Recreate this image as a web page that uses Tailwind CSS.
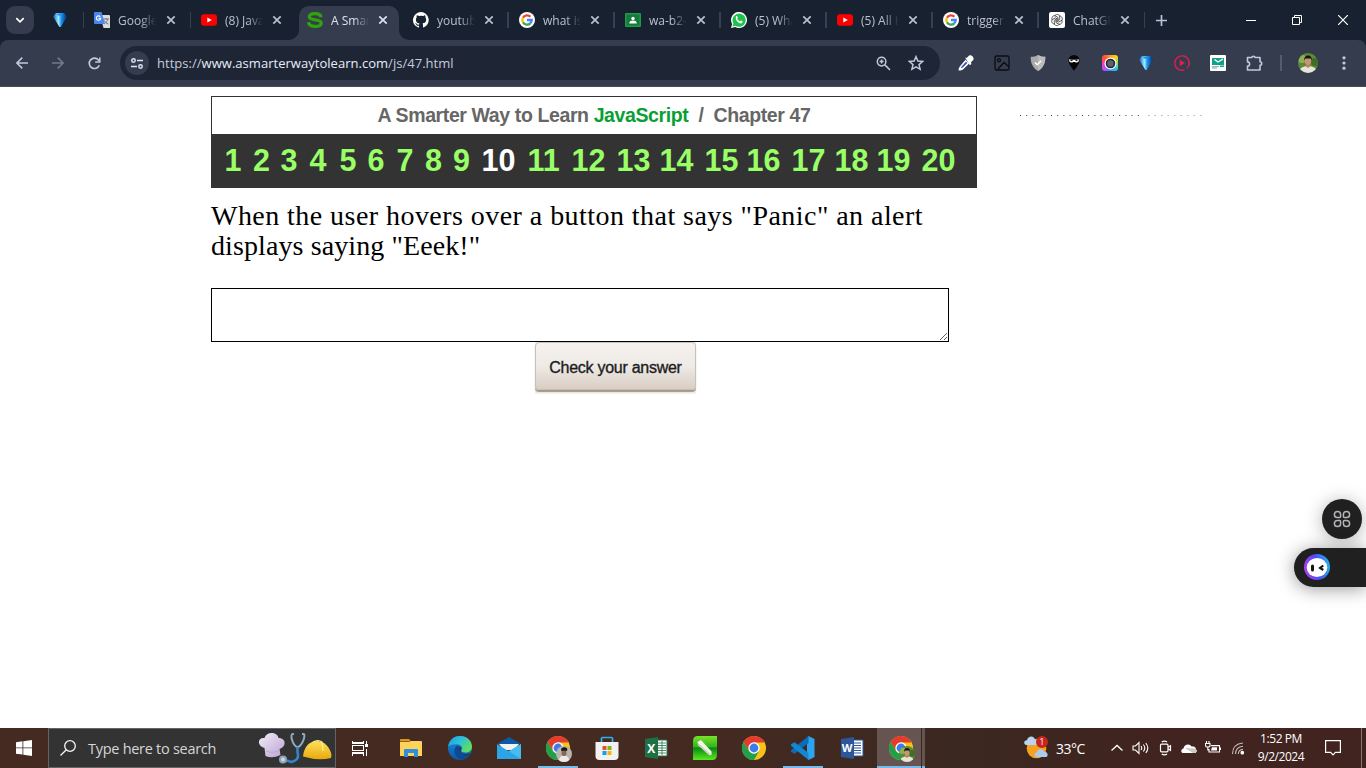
<!DOCTYPE html>
<html lang="en">
<head>
<meta charset="utf-8">
<title>A Smarter Way to Learn JavaScript</title>
<script src="https://cdn.jsdelivr.net/npm/@tailwindcss/browser@4"></script>
</head>
<body class="w-[1366px] h-[768px] overflow-hidden bg-white flex flex-col relative font-['Open_Sans',sans-serif]">

<svg class="absolute w-0 h-0" aria-hidden="true">
  <defs>
    <linearGradient id="gemg" x1="0" x2="1"><stop offset="0" stop-color="#0b5ec4"/><stop offset=".38" stop-color="#9ff0ff"/><stop offset=".6" stop-color="#1590f0"/><stop offset="1" stop-color="#062f72"/></linearGradient>
    <linearGradient id="edgeg" x1="0" y1="0" x2="1" y2=".6"><stop offset="0" stop-color="#1b9de2"/><stop offset=".5" stop-color="#2fc0d8"/><stop offset="1" stop-color="#5fe05a"/></linearGradient>
    <linearGradient id="edgeb" x1="0" y1="0" x2="0" y2="1"><stop offset="0" stop-color="#1b8fdf"/><stop offset="1" stop-color="#0d57a8"/></linearGradient>
    <linearGradient id="hat" x1="0" y1="0" x2="1" y2="1"><stop offset="0" stop-color="#f4ecf8"/><stop offset="1" stop-color="#b9a3d3"/></linearGradient>
    <linearGradient id="helm" x1="0" y1="0" x2="0" y2="1"><stop offset="0" stop-color="#ffe05a"/><stop offset="1" stop-color="#e8a90c"/></linearGradient>
    <linearGradient id="green" x1="0" y1="0" x2="0" y2="1"><stop offset="0" stop-color="#7be02a"/><stop offset=".45" stop-color="#2fb91a"/><stop offset=".5" stop-color="#078a12"/><stop offset="1" stop-color="#5ce820"/></linearGradient>
    <linearGradient id="bot" x1="0" y1="0.6" x2="1" y2="0.4"><stop offset="0" stop-color="#b13cf0"/><stop offset=".5" stop-color="#4a4cf5"/><stop offset="1" stop-color="#27b2f0"/></linearGradient>
    <clipPath id="circ"><circle cx="10" cy="10" r="10"/></clipPath>
    <symbol id="gem" viewBox="0 0 16 16"><path d="M3.800 1h8.400L14.800 4.800 8.800 15H7.400L1.200 4.800z" fill="url(#gemg)"/><path d="M4.400 1.400h7L9.800 3.600H6z" fill="#1b8ff0"/></symbol>
    <symbol id="yt" viewBox="0 0 16 16"><rect y="2.300" width="16" height="11.400" rx="3" fill="#f00"/><path d="M6.300 5.400v5.200L10.800 8z" fill="#fff"/></symbol>
    <symbol id="goog" viewBox="0 0 16 16"><circle cx="8" cy="8" r="8" fill="#fff"/><g fill="none" stroke-width="2.300"><path d="M4 5.600A4.700 4.700 0 0 1 11.400 4.700" stroke="#ea4335"/><path d="M4 10.400a4.700 4.700 0 0 1 0-4.800" stroke="#fbbc05"/><path d="M11.200 11.400A4.700 4.700 0 0 1 4 10.400" stroke="#34a853"/><path d="M8 8h4.700a4.700 4.700 0 0 1-1.500 3.400" stroke="#4285f4"/></g></symbol>
    <symbol id="chrome" viewBox="0 0 24 24"><circle cx="12" cy="12" r="12" fill="#fbc116"/><path d="M12 6.500H22.600A12 12 0 0 0 1.600 6l5.200 9z" fill="#e33b2e"/><path d="M1.600 6 6.800 15 12 17.500l5.200-2.500L12 24A12 12 0 0 1 1.600 6z" fill="#1fa04b"/><circle cx="12" cy="12" r="5.700" fill="#fff"/><circle cx="12" cy="12" r="4.400" fill="#3b7ded"/></symbol>
    <symbol id="face" viewBox="0 0 20 20"><g clip-path="url(#circ)"><rect width="20" height="20" fill="#5c8a35"/><circle cx="4" cy="6" r="4" fill="#8fae5a"/><circle cx="17" cy="9" r="4" fill="#406e28"/><path d="M1 20c0-5 4-7 9-7s9 2 9 7z" fill="#e7e4da"/><path d="M8 10h4v3.500l-2 1.500-2-1.500z" fill="#b9825f"/><ellipse cx="10" cy="8" rx="3.200" ry="4" fill="#c99474"/><path d="M6.300 7.500c-1-6.500 8.300-7 7.500 0l-1-2H7.400z" fill="#17130f"/></g></symbol>
    <symbol id="x" viewBox="0 0 10 10"><path d="M1.300 1.300l7.400 7.400M8.700 1.300 1.300 8.700" stroke="currentColor" stroke-width="1.700"/></symbol>
  </defs>
</svg>

<!-- Tab strip -->
<header class="h-10 bg-[#18212f] flex shrink-0 text-[#b9c0d0] text-[12px]">
  <div class="w-[83px] flex items-start pl-1.5 pt-1.5">
    <div class="size-7 rounded-[9px] bg-[#343c4d] flex items-center justify-center"><svg class="size-[10px] text-white" viewBox="0 0 10 10"><path d="M1.300 3.200 5 6.800l3.700-3.600" fill="none" stroke="currentColor" stroke-width="1.700"/></svg></div>
    <svg class="size-4 ml-[17.500px] mt-1.5"><use href="#gem"/></svg>
  </div>
  <div class="w-[1061px] grid grid-cols-10">
    <div class="flex h-10 items-center relative"><i class="absolute left-[-0.500px] w-[1.500px] h-4 bg-[#364052]"></i>
      <svg class="size-4 ml-[11px]" viewBox="0 0 16 16"><path d="M6 3h9a1 1 0 0 1 1 1v12H9.500z" fill="#dcdcdc"/><path d="M9 7h6M12 6v1.500M10 12c2-1 3.500-3 3.800-5M10.500 8.500c.5 1.500 2 3 4 3.500" stroke="#6c7a86" fill="none"/><path d="M1 0h6.500L11 12H1a1 1 0 0 1-1-1V1a1 1 0 0 1 1-1z" fill="#4a86f0"/><path d="M6.300 4.800a2.200 2.200 0 1 0 .4 1.600H4.600" fill="none" stroke="#fff" stroke-width="1.100"/></svg>
      <span class="pt-0.5 ml-2 w-[38px] overflow-hidden whitespace-nowrap mask-r-from-60% mask-r-to-100%">Google Translate</span><svg class="size-[10px] ml-[9.500px]"><use href="#x"/></svg></div>
    <div class="flex h-10 items-center relative"><i class="absolute left-[0.500px] w-[1.500px] h-4 bg-[#364052]"></i>
      <svg class="size-4 ml-[11.900px]"><use href="#yt"/></svg><span class="pt-0.5 ml-2 w-[38px] overflow-hidden whitespace-nowrap mask-r-from-60% mask-r-to-100%">(8) JavaScript</span><svg class="size-[10px] ml-[9.500px]"><use href="#x"/></svg></div>
    <div class="flex h-10 items-center relative text-[#dde2ee]">
      <div class="absolute left-[3.800px] top-1.5 w-[100px] h-[34px] rounded-t-[10px] bg-[#343c4d]"></div>
      <svg class="absolute left-[-6px] bottom-0 size-[10px]" viewBox="0 0 10 10"><path d="M10 0v10H0A10 10 0 0 0 10 0" fill="#343c4d"/></svg>
      <svg class="absolute left-[103.500px] bottom-0 size-[10px] z-10" viewBox="0 0 10 10"><path d="M0 0v10h10A10 10 0 0 1 0 0" fill="#343c4d"/></svg>
      <svg class="size-4 ml-[11.800px] relative" viewBox="0 0 16 16"><path d="M14 5.300C13.700 2.600 11.500 1.600 8 1.600S2.300 2.700 2.300 4.700c0 4.600 11.900 1.600 11.900 6.200 0 2.300-2.200 3.500-6.100 3.500-3.700 0-6.200-1.200-6.500-4.200" fill="none" stroke="#2fa30b" stroke-width="3.300"/></svg>
      <span class="relative pt-0.5 ml-2 w-[38px] overflow-hidden whitespace-nowrap mask-r-from-60% mask-r-to-100%">A Smarter Way</span><svg class="relative size-[10px] ml-[9.500px]"><use href="#x"/></svg></div>
    <div class="flex h-10 items-center relative">
      <svg class="size-4 ml-[11.700px]" viewBox="0 0 16 16"><path d="M8 0a8 8 0 0 0-2.530 15.590c.4.070.55-.17.550-.380v-1.490C3.800 14.200 3.330 12.650 3.330 12.650c-.36-.92-.89-1.170-.89-1.170-.73-.5.060-.49.060-.49.800.060 1.230.830 1.230.830.710 1.220 1.870.870 2.330.660.070-.52.280-.87.510-1.070-1.780-.2-3.640-.89-3.640-3.950 0-.87.310-1.590.820-2.150-.08-.2-.36-1.010.080-2.120 0 0 .67-.21 2.200.820a7.600 7.600 0 0 1 4 0c1.530-1.040 2.200-.82 2.200-.82.440 1.110.160 1.920.080 2.120.510.560.820 1.280.820 2.150 0 3.070-1.870 3.750-3.650 3.950.290.250.540.730.540 1.480v2.200c0 .210.150.460.550.380A8 8 0 0 0 8 0" fill="#fff"/></svg>
      <span class="pt-0.5 ml-2 w-[38px] overflow-hidden whitespace-nowrap mask-r-from-60% mask-r-to-100%">youtube</span><svg class="size-[10px] ml-[9.500px]"><use href="#x"/></svg></div>
    <div class="flex h-10 items-center relative"><i class="absolute left-0 w-[1.500px] h-4 bg-[#364052]"></i>
      <svg class="size-4 ml-[11.600px]"><use href="#goog"/></svg><span class="pt-0.5 ml-2 w-[38px] overflow-hidden whitespace-nowrap mask-r-from-60% mask-r-to-100%">what is a</span><svg class="size-[10px] ml-[9.500px]"><use href="#x"/></svg></div>
    <div class="flex h-10 items-center relative"><i class="absolute left-0 w-[1.500px] h-4 bg-[#364052]"></i>
      <svg class="size-4 ml-[11.500px]" viewBox="0 0 16 16"><rect y="1" width="16" height="14" rx="1" fill="#1f9b4d"/><rect x="1.500" y="2.500" width="13" height="11" fill="#137a38"/><circle cx="8" cy="6.500" r="1.700" fill="#fff"/><path d="M4.200 11.500c0-2.400 2-3 3.800-3s3.800.6 3.800 3z" fill="#fff"/></svg>
      <span class="pt-0.5 ml-2 w-[38px] overflow-hidden whitespace-nowrap mask-r-from-60% mask-r-to-100%">wa-b2-q</span><svg class="size-[10px] ml-[9.500px]"><use href="#x"/></svg></div>
    <div class="flex h-10 items-center relative"><i class="absolute left-[-0.500px] w-[1.500px] h-4 bg-[#364052]"></i>
      <svg class="size-4 ml-[11.400px]" viewBox="0 0 16 16"><path d="M0 16 1.100 12A8 8 0 1 1 4.200 15z" fill="#fff"/><path d="M1.500 14.500l.9-3A6.600 6.600 0 1 1 4.500 13.700z" fill="#1fc24b"/><path d="M5 4.300c.5-.6 1-.5 1.200-.1l.7 1.600-.7 1c.5 1.200 1.500 2 2.700 2.600l.9-.9 1.700.8c.4.300 0 1.600-.9 2-2.600 1-6.900-3.200-5.600-7z" fill="#fff"/></svg>
      <span class="pt-0.5 ml-2 w-[38px] overflow-hidden whitespace-nowrap mask-r-from-60% mask-r-to-100%">(5) WhatsApp</span><svg class="size-[10px] ml-[9px]"><use href="#x"/></svg></div>
    <div class="flex h-10 items-center relative"><i class="absolute left-[-0.500px] w-[1.500px] h-4 bg-[#364052]"></i>
      <svg class="size-4 ml-[11.300px]"><use href="#yt"/></svg><span class="pt-0.5 ml-2 w-[38px] overflow-hidden whitespace-nowrap mask-r-from-60% mask-r-to-100%">(5) All HTML</span><svg class="size-[10px] ml-[9px]"><use href="#x"/></svg></div>
    <div class="flex h-10 items-center relative"><i class="absolute left-[-0.500px] w-[1.500px] h-4 bg-[#364052]"></i>
      <svg class="size-4 ml-[11.200px]"><use href="#goog"/></svg><span class="pt-0.5 ml-2 w-[38px] overflow-hidden whitespace-nowrap mask-r-from-70% mask-r-to-100%">trigger in</span><svg class="size-[10px] ml-[9px]"><use href="#x"/></svg></div>
    <div class="flex h-10 items-center relative"><i class="absolute left-[-0.500px] w-[1.500px] h-4 bg-[#364052]"></i>
      <svg class="size-4 ml-[11.100px]" viewBox="0 0 16 16"><rect width="16" height="16" rx="2" fill="#fff"/><g fill="none" stroke="#333" stroke-width=".75"><path id="pt" d="M5.700 4.200C6.300 2 9.700 1.700 10.700 4v3.600L8 9.200"/><use href="#pt" transform="rotate(60 8 8)"/><use href="#pt" transform="rotate(120 8 8)"/><use href="#pt" transform="rotate(180 8 8)"/><use href="#pt" transform="rotate(240 8 8)"/><use href="#pt" transform="rotate(300 8 8)"/></g></svg>
      <span class="pt-0.5 ml-2 w-[38px] overflow-hidden whitespace-nowrap mask-r-from-60% mask-r-to-100%">ChatGPT</span><svg class="size-[10px] ml-[9px]"><use href="#x"/></svg></div>
  </div>
  <div class="flex items-center w-[84px]"><i class="-ml-[0.500px] w-[1.500px] h-4 bg-[#364052]"></i><svg class="size-[11px] ml-[10.500px]" viewBox="0 0 11 11"><path d="M5.500 0v11M0 5.500h11" stroke="#b9c0d8" stroke-width="1.700"/></svg></div>
  <div class="grid grid-cols-3 w-[138px] items-center justify-items-center">
    <svg class="w-[10px] h-[11px]" viewBox="0 0 10 11" shape-rendering="crispEdges"><path d="M0 5.500h10" stroke="#fff"/></svg>
    <svg class="size-[10px]" viewBox="0 0 10 10" fill="none" stroke="#fff"><path d="M.5 2.500h7v7h-7zM2.500 2.500v-2h7v7h-2"/></svg>
    <svg class="size-[10px]" viewBox="0 0 10 10"><path d="M0 0l10 10M10 0 0 10" stroke="#fff" stroke-width="1.200"/></svg>
  </div>
</header>

<!-- Toolbar -->
<div class="bg-[#18212f] shrink-0">
<nav class="h-[47px] bg-[#343c4d] border-b border-[#4a4c54] rounded-t-[8px] flex items-center text-[#c3c9dc]">
  <div class="flex w-[116px] pl-1 shrink-0">
    <div class="w-9 flex justify-center"><svg class="size-3" viewBox="0 0 12 12"><path d="M12 6H1M6.300.6.900 6l5.400 5.400" fill="none" stroke="#c3c9dc" stroke-width="1.500"/></svg></div>
    <div class="w-9 flex justify-center"><svg class="size-3" viewBox="0 0 12 12"><path d="M0 6h11M5.700.6 11.100 6l-5.400 5.400" fill="none" stroke="#737b8b" stroke-width="1.500"/></svg></div>
    <div class="w-9 flex justify-center"><svg class="size-[13px]" viewBox="0 0 13 13"><path d="M11.300 8.200A5.200 5.200 0 1 1 10.500 3L12 4.500" fill="none" stroke="#c3c9dc" stroke-width="1.600"/><path d="M11.800.4v4.600H7.200" fill="none" stroke="#c3c9dc" stroke-width="1.500"/></svg></div>
  </div>
  <div class="ml-1 w-[820px] h-[34px] rounded-full bg-[#1e2636] flex items-center shrink-0">
    <div class="ml-[5px] size-6 rounded-full bg-[#343c4d] flex items-center justify-center"><svg class="w-3 h-[11px]" viewBox="0 0 12 11" fill="none" stroke="#dfe4f0" stroke-width="1.500"><circle cx="2.500" cy="2.500" r="1.700"/><path d="M6 2.500h6M0 8.500h6"/><circle cx="9.500" cy="8.500" r="1.700"/></svg></div>
    <div class="ml-2 pt-0.5 text-[13px] tracking-[0.030px] whitespace-nowrap text-[#c5cad6]">https://<span class="text-[#e9edf6]">www.asmarterwaytolearn.com</span>/js/47.html</div>
    <svg class="ml-auto size-[15px]" viewBox="0 0 15 15" fill="none" stroke="#c3c9dc" stroke-width="1.500"><circle cx="5.600" cy="5.600" r="4.300"/><path d="m8.900 8.900 5.100 5.100M5.600 3.600v4M3.600 5.600h4"/></svg>
    <svg class="ml-[17px] mr-4 size-4" viewBox="0 0 16 16"><path d="m8 1.700 1.900 4.400 4.700.4-3.600 3.100 1.100 4.700L8 11.800l-4.100 2.500L5 9.600 1.400 6.500l4.700-.4z" fill="none" stroke="#c3c9dc" stroke-width="1.500"/></svg>
  </div>
  <div class="ml-2 grid grid-cols-9 w-[324px] justify-items-center items-center">
    <svg class="size-4" viewBox="0 0 16 16"><path d="M.6 15.400c0-1.800.5-3.200 1.600-4.400L7.500 4.800l3.700 3.700-5.700 5.400c-1.300 1.100-2.900 1.700-4.900 1.500z" fill="#fff"/><path d="m2.800 13.200.8-1.800L8 6.800l1.300 1.300-4.500 4.300z" fill="#2c50c8"/><path d="m7 2.500 1.600.4L11.100.6c2-1.200 5.500 1.800 4.300 4.200L13 7.300l.4 1.700-1.500 1.200z" fill="#fff"/></svg>
    <svg class="size-4" viewBox="0 0 16 16" fill="none" stroke="#0b0d12" stroke-width="1.300"><rect x="1" y="1" width="14" height="14" rx="1.500"/><circle cx="5" cy="5.200" r="1.500"/><path d="m4 14 6-6.500 5 4.500"/></svg>
    <svg class="size-4" viewBox="0 0 16 16"><path d="M8 0c2 1.300 4.500 1.800 7.300 1.800C15.500 9 12.500 13.500 8 16 3.500 13.500.5 9 .7 1.800 3.500 1.800 6 1.300 8 0" fill="#aaa"/><path d="M8 0c2 1.300 4.500 1.800 7.300 1.800C15.500 9 12.500 13.500 8 16z" fill="#bcbcbc"/><path d="m5 7.500 2.200 2.200 4-4" fill="none" stroke="#fff" stroke-width="1.500"/></svg>
    <svg class="size-4" viewBox="0 0 16 16"><path d="M8 16C6.500 13 2.500 9.500 2.500 5.500a5.500 5.500 0 0 1 11 0C13.500 9.500 9.500 13 8 16" fill="#050505"/><path d="M3.200 4.300c3 .7 6.600.7 9.600 0 .3 2.300-.6 3.200-2.300 3.200-1.100 0-1.500-.6-2.500-.6s-1.400.6-2.500.6c-1.700 0-2.600-.9-2.300-3.200" fill="#fff"/><path d="M4.500 5.600h2M9.500 5.600h2" stroke="#000"/></svg>
    <div class="size-4 rounded-[3px] bg-[conic-gradient(#ff9a1f,#ffd21f,#7fdf5f,#28c7f0,#3587ff,#c04cff,#ff3aa8,#ff5030,#ff9a1f)] flex items-center justify-center"><svg class="size-[13px]" viewBox="0 0 13 13"><circle cx="6.500" cy="6.500" r="6" fill="#fff"/><circle cx="6.500" cy="6.500" r="4" fill="#5b626c" stroke="#242a33" stroke-width="1.600"/></svg></div>
    <svg class="size-4"><use href="#gem"/></svg>
    <svg class="size-4" viewBox="0 0 16 16"><path d="M14.300 11.500A7.200 7.200 0 1 0 10.500 14.800" fill="none" stroke="#d5204f" stroke-width="1.400"/><path d="M15 6.500a7.200 7.200 0 0 1-2.300 7" fill="none" stroke="#d5204f" stroke-width="1.200"/><path d="M5.700 4.800v6.400L11 8z" fill="#e01f50"/></svg>
    <svg class="size-4" viewBox="0 0 16 16"><rect width="16" height="16" rx="1" fill="#fff"/><path d="M2 3h12v7H2z" fill="#12a08a"/><path d="m4.500 4.500 3.500 2.500 5-3" fill="none" stroke="#fff" stroke-width="1.400"/><path d="M2 11.700h7M2 13h5" stroke="#6b8f9b" stroke-width=".8"/><path d="M10 10.500h4v1.500h-4z" fill="#17a88f"/></svg>
    <svg class="w-[17px] h-4" viewBox="0 0 17 16"><path d="M1.500 2.500h4.300a1.700 1.700 0 0 1 3.300 0h4.900v4.300a1.700 1.700 0 0 1 0 3.400V15H1.500v-3.900a2.100 2.100 0 0 0 0-4.200z" fill="none" stroke="#c3c9dc" stroke-width="1.600" stroke-linejoin="round"/></svg>
  </div>
  <i class="ml-2 w-[1.500px] h-4 bg-[#525b70]"></i>
  <svg class="ml-[16.500px] size-5"><use href="#face"/></svg>
  <svg class="ml-6 w-1 h-[14px]" viewBox="0 0 4 14" fill="#c3c9dc"><circle cx="2" cy="1.800" r="1.600"/><circle cx="2" cy="7" r="1.600"/><circle cx="2" cy="12.200" r="1.600"/></svg>
</nav>
</div>

<!-- Page -->
<main class="flex-1 flex items-start pt-[9px] pl-[211px]">
  <section class="w-[766px]">
    <div class="h-[38px] border border-b-0 border-[#333] flex justify-center items-center font-['Liberation_Sans',sans-serif] font-bold text-[19.500px] text-[#666] whitespace-pre"><span class="tracking-[-0.390px]">A Smarter Way to Learn <span class="text-[#0a9f35]">JavaScript</span>  /  Chapter 47</span></div>
    <div class="h-[54px] bg-[#333] pl-[13.500px] grid items-center grid-cols-[28.5px_27.5px_29px_30px_28px_29px_28.500px_28px_28.500px_46px_44px_45px_43px_45px_42px_45px_43px_42px_45px_40px] font-['Liberation_Sans',sans-serif] font-bold text-[30.500px] text-[#9f6]">
      <span>1</span><span>2</span><span>3</span><span>4</span><span>5</span><span>6</span><span>7</span><span>8</span><span>9</span><span class="text-white">10</span><span>11</span><span>12</span><span>13</span><span>14</span><span>15</span><span>16</span><span>17</span><span>18</span><span>19</span><span>20</span>
    </div>
    <p class="mt-[13px] font-['Georgia','Liberation_Serif',serif] text-[28px] leading-[30px] text-black whitespace-nowrap"><span class="tracking-[0.450px]">When the user hovers over a button that says "Panic" an alert</span><br><span class="tracking-[0.100px]">displays saying "Eeek!"</span></p>
    <textarea class="mt-[27px] block w-[738px] h-[54px] border border-black bg-white resize outline-none"></textarea>
    <div class="ml-[324px] w-[161px] h-[52px] bg-[#f3f0ec]">
      <button class="block w-[161px] h-[48px] rounded-[4px] border border-[#c9c1b8] bg-linear-to-b from-[#f5f2ef] via-[#eeeae6] to-[#d9cec3] shadow-[0_2px_1px_#a3988a] font-['Liberation_Sans',sans-serif] text-[16px] text-[#1c1c1c] [-webkit-text-stroke:0.350px_#1c1c1c] whitespace-nowrap"><span class="relative top-0.5 tracking-[-0.270px]">Check your answer</span></button>
    </div>
  </section>
  <svg class="ml-[42px] mt-[18px] w-[184px] h-[3px]" viewBox="0 0 184 3"><path d="M1 1.500h124" stroke="#444" stroke-dasharray="1 5.200"/><path d="M129 1.500h55" stroke="#b5b5b5" stroke-dasharray="1.500 5"/></svg>
</main>

<!-- Floating assistant widgets -->
<div class="absolute left-[1322px] top-[499px] size-10 rounded-full bg-[#202020] shadow-[0_2px_18px_rgba(0,0,0,0.3)] flex items-center justify-center">
  <svg class="size-[18px]" viewBox="0 0 18 18" fill="none" stroke="#b4b4b8" stroke-width="1.500"><path id="pl" d="M7.600 4.500V6.600a1 1 0 0 1-1 1H4.500A3.100 3.100 0 0 1 1.400 4.500 3.100 3.100 0 0 1 7.600 4.500z"/><use href="#pl" transform="rotate(90 9 9)"/><use href="#pl" transform="rotate(180 9 9)"/><use href="#pl" transform="rotate(270 9 9)"/></svg>
</div>
<div class="absolute left-[1294px] top-[548px] w-[72px] h-[39px] rounded-l-full bg-[#202020] shadow-[0_2px_18px_rgba(0,0,0,0.4)] flex items-center pl-[10px] pb-px">
  <svg class="size-[26px]" viewBox="0 0 26 26"><circle cx="13" cy="13" r="13" fill="url(#bot)"/><ellipse cx="13" cy="13.500" rx="10.300" ry="9.500" fill="#fff"/><path d="M8.500 12v4" stroke="#151515" stroke-width="3" stroke-linecap="round"/><path d="m19.300 11.500-3.200 2.500 3.200 2" fill="none" stroke="#151515" stroke-width="2.200"/></svg>
</div>

<!-- Taskbar -->
<footer class="h-10 shrink-0 bg-linear-to-r from-[#452a22] from-50% via-[#3b2820] via-70% to-[#41231f] to-85% flex text-white">
  <div class="w-12 shrink-0 flex items-center justify-center"><svg class="size-4" viewBox="0 0 16 16" fill="#fff"><path d="M0 2.200 6.500 1.300v6.200H0zM7.300 1.200 16 0v7.500H7.300zM0 8.300h6.500v6.300L0 13.700zM7.300 8.300H16V16l-8.700-1.300z"/></svg></div>
  <div class="w-[288px] shrink-0 bg-[#333] border border-[#646464] flex items-center overflow-hidden">
    <svg class="ml-[11px] size-4 shrink-0" viewBox="0 0 16 16" fill="none" stroke="#f5f5f5" stroke-width="1.300"><circle cx="10" cy="6" r="5.300"/><path d="M6.300 9.700.5 15.500"/></svg>
    <span class="ml-[12px] pt-px text-[14.500px] tracking-[-0.280px] text-[#d6d6d6] whitespace-nowrap w-[169px]">Type here to search</span>
    <svg class="ml-px w-[76px] h-[34px] shrink-0" viewBox="0 0 76 34"><path d="M6.500 17C-1.500 15-.5 6 6.500 7c2-7 13-6 14 0 8 0 8 9 1 11l1 6q-8 4-15 1z" fill="url(#hat)"/><path d="M8 20q7 3 14-1" stroke="#b3a2cc" stroke-width=".8" fill="none"/><path d="M36 3h-1.500C32 3 34 14 39.500 16.500 45 14 48 3 45.500 3H44" fill="none" stroke="#8fa9bd" stroke-width="2"/><path d="M39.500 16v5c2 7-2 9-6 10l-7-2" fill="none" stroke="#2f86d2" stroke-width="2.600"/><circle cx="25" cy="28.500" r="4" fill="#8ea4b4"/><circle cx="25" cy="28.500" r="2" fill="#c9d6df"/><path d="M45 25.500C46 15 52 10 59 10s13 6 14.500 14l-.5 3q-13 3-28-1.500z" fill="url(#helm)"/><path d="M55 11q5-3 9 0l1 9" stroke="#fff09a" stroke-width="1.200" fill="none"/></svg>
  </div>
  <div class="grid grid-cols-12 ml-px w-[588.500px] shrink-0 items-center justify-items-center">
    <svg class="size-4 -ml-[3px]" viewBox="0 0 16 16" fill="none" stroke="#fff" stroke-width="1.200" shape-rendering="crispEdges"><path d="M.6.500v2.500h11V.5M.6 15.500V13h11v2.500M.6 5.500h11v5H.6zM14.500.500v3M14.500 8.500v7"/><path d="M13 4h3v3h-3z" fill="#fff" stroke="none"/></svg>
    <svg class="size-6" viewBox="0 0 24 24"><path d="M1 4q0-1 1-1h8l2 2.500H1z" fill="#d99a1c"/><path d="M1 6h9l2-1h10q1 0 1 1v14H1z" fill="#ffd35a"/><path d="M5 21v-7q0-1 1-1h12q1 0 1 1v7h-4v-4H9v4z" fill="#2f8fdc"/></svg>
    <svg class="size-6" viewBox="0 0 24 24"><circle cx="12" cy="12" r="12" fill="url(#edgeb)"/><path d="M.2 10.500C1.500 3 6.500 0 12 0c7 0 12 5 12 10.500 0 4-3 6-6.500 6-3 0-4.500-1-4-2 1.500-2 .5-5.500-3.500-6C6 8 2 9 .2 10.500z" fill="url(#edgeg)"/><path d="M9 9.500c-4 3-3.500 11 3 14 4 0 8-2 10-5.500-4 2-8 1-9.500-1.500-1.500-2-1-4 0-5.500z" fill="#0b4a94"/><path d="M13.500 12c-2 2-1 5 2.500 6 2.500.5 5-.3 6.500-1l-.8 1.500C15 21 9 15 12 11z" fill="#432b24"/></svg>
    <svg class="size-6" viewBox="0 0 24 24"><path d="M0 8 12 1l12 7H0z" fill="#0c59a4"/><path d="M2 8h20l-5 6H7z" fill="#f1f1f1"/><path d="M0 8v15h24V8L13.500 14.500q-1.500 1-3 0z" fill="#2ba4e8"/><path d="M24 8v15L11 14.700l2 0z" fill="#46bdf2"/></svg>
    <div class="h-10 w-10 relative flex items-center justify-center border-b-2 border-[#76b9ed] pt-0.5"><svg class="size-6 relative"><use href="#chrome"/></svg><svg class="absolute left-[18px] top-[18px] size-4" viewBox="0 0 20 20"><g clip-path="url(#circ)"><rect width="20" height="20" fill="#b8b5b0"/><path d="M3 20q1-8 7-8t7 8z" fill="#ecebea"/><path d="M7 4h6v7q-3 3-6 0z" fill="#8d6550"/><path d="M6.500 6V3q4-3 7.500 0v3z" fill="#1b1715"/></g></svg></div>
    <svg class="size-6" viewBox="0 0 24 24"><path d="M.5 6h23v14q0 4-4 4h-15q-4 0-4-4z" fill="#f1f1f1"/><path d="M6.500 6V2.500q0-1 1-1h9q1 0 1 1V6" fill="none" stroke="#2fb1ea" stroke-width="1.700"/><path d="M7.500 10h4v4h-4z" fill="#e8502c"/><path d="M12.500 10h4v4h-4z" fill="#7fb718"/><path d="M7.500 15h4v4h-4z" fill="#14a0e8"/><path d="M12.500 15h4v4h-4z" fill="#f7b50c"/></svg>
    <svg class="size-6" viewBox="0 0 24 24"><path d="M12 4h11v16H12z" fill="#fff" stroke="#217346"/><path d="M14 7h8M14 9.500h8M14 12h8M14 14.500h8M14 17h8M18 5v14" stroke="#217346" stroke-width=".8"/><path d="M1 3 14 1v22L1 21z" fill="#1e7145"/><text x="3.300" y="16.500" font-family="Open Sans" font-size="12" font-weight="700" fill="#fff">X</text></svg>
    <svg class="size-6" viewBox="0 0 24 24"><path d="M5 0h19v19q0 5-5 5H0V5q0-5 5-5z" fill="url(#green)"/><path d="m4.500 6 2.500-1.500q1-.5 2 .5l9.500 10.500V19q-2 .5-3-.5L5 9z" fill="#f4f4ea"/><path d="m5 9 10.500 9.500 3 .3L5 7z" fill="#c9cfbc"/></svg>
    <svg class="size-6"><use href="#chrome"/></svg>
    <div class="h-10 w-10 flex items-center justify-center border-b-2 border-[#76b9ed] pt-0.5"><svg class="size-6" viewBox="0 0 24 24"><path d="m17.500 0 6 3v18l-6 3L16 22V2z" fill="#2ca4ef"/><path d="M17.500 0v7L3.500 17.800 0 15.800v-1.600z" fill="#0b6db8"/><path d="M17.500 24v-7L3.500 6.200 0 8.200v1.600z" fill="#1287d4"/></svg></div>
    <svg class="size-6" viewBox="0 0 24 24"><path d="M12 4h11v16H12z" fill="#fff" stroke="#2b579a"/><path d="M14 7h7M14 9.500h7M14 12h7M14 14.500h7M14 17h7" stroke="#2b579a" stroke-width="1.100"/><path d="M1 3 14 1v22L1 21z" fill="#2b579a"/><text x="1.800" y="16" font-family="Open Sans" font-size="11" font-weight="700" fill="#fff">W</text></svg>
    <div class="h-10 w-12 relative flex bg-[#665450] border-b-2 border-[#76b9ed]"><i class="absolute right-[3px] top-0 w-px h-10 bg-[#392822]"></i><svg class="absolute left-[12px] top-2 size-6"><use href="#chrome"/></svg><svg class="absolute left-[22px] top-[18px] size-4"><use href="#face"/></svg></div>
  </div>
  <div class="ml-[98.500px] flex items-center">
    <svg class="size-6 shrink-0" viewBox="0 0 24 24"><circle cx="12.500" cy="12.500" r="9.800" fill="#f6a21c"/><path d="M3 9C-1 9-.5 4 3 4.300 4-.5 10-.5 11 3.500c4-.5 4 5 1 5.500z" fill="#b8d4f2"/><path d="M13 21c-4 0-3-5 0-4.500 1-4.500 6-4.500 7-.7 4.500-.5 4.500 5.200 1.500 5.200z" fill="#a9cbf0"/><circle cx="18" cy="6" r="6" fill="#c8251f"/><text x="18" y="9" text-anchor="middle" font-family="Open Sans" font-size="8.500" fill="#fff">1</text></svg>
    <span class="ml-2 text-[14px] tracking-[-0.500px] w-[57px]">33°C</span>
    <div class="flex w-[146px] -ml-0.5 [&>svg]:shrink-0 items-center">
      <svg class="size-3" viewBox="0 0 12 12"><path d="m.5 8.500 5.500-5 5.500 5" fill="none" stroke="#fff" stroke-width="1.300"/></svg>
      <svg class="ml-[9px] w-[18px] h-4" viewBox="0 0 18 16" fill="none" stroke="#fff" stroke-width="1.100"><path d="M1 6h2.500L7 2.500v11L3.500 10H1zM9 6q1.500 2 0 4M11.300 4.500q3 3.500 0 7M13.800 3q4 5 0 10"/></svg>
      <svg class="ml-[9px] w-[14px] h-4" viewBox="0 0 14 16" fill="none" stroke="#fff" stroke-width="1.200"><rect x="1.500" y="4.200" width="7.500" height="7.600" rx="1"/><path d="m9 7.300 2.500-1.500v4.500L9 8.700M2.800 2Q5.500.2 8 2M2.800 14q2.700 1.800 5.200 0"/></svg>
      <svg class="ml-[8px] w-4 h-4" viewBox="0 0 16 16"><path d="M2.500 13C-.5 13-.5 9 2.500 8.500 3 4 9 3 10.500 6.500c4-.5 4 1.500 5 3.500.7 1.500-.5 3-2 3z" fill="#fff"/><path d="m4 8 8 5h2c2-1 2-3.500 0-4.500z" fill="#ccc8c7"/></svg>
      <svg class="ml-2 w-4 h-4" viewBox="0 0 16 16" fill="none" stroke="#fff" stroke-width="1.100"><path d="M6 5.600h8.500v6.400H4V9M.5 3.500h4.500v2q0 1.500-2.200 1.500T.5 5.500zM1.500 3.500V1M4 3.500V1M2.800 7v3H4M15.500 7.500v2.500"/><path d="M7 7.200h5v3.300H6z" fill="#fff" stroke="none"/></svg>
      <svg class="ml-[10px] w-[14px] h-4" viewBox="0 0 14 16" fill="none" stroke="#c9bdbb" stroke-width="1.100"><path d="M1.500 14Q1.500 4 12 3M4.500 14Q4.500 7 12 6.200M7.300 14Q7.500 9.800 12 9.300"/><circle cx="11.300" cy="12.700" r="1.300" fill="#fff" stroke="#fff"/></svg>
    </div>
    <div class="w-[48px] text-[12px] leading-[18px] tracking-[-0.440px] text-center whitespace-nowrap flex flex-col items-center -mt-px"><span>1:52 PM</span><span>9/2/2024</span></div>
    <svg class="ml-5 size-4 shrink-0" viewBox="0 0 16 16"><path d="M.6.600h14.800v11.800h-5L8 14.800l-2.400-2.400h-5z" fill="none" stroke="#fff" stroke-width="1.200"/></svg>
  </div>
  <i class="ml-auto mr-1 w-px h-10 bg-[#8a7773]"></i>
</footer>
</body>
</html>
